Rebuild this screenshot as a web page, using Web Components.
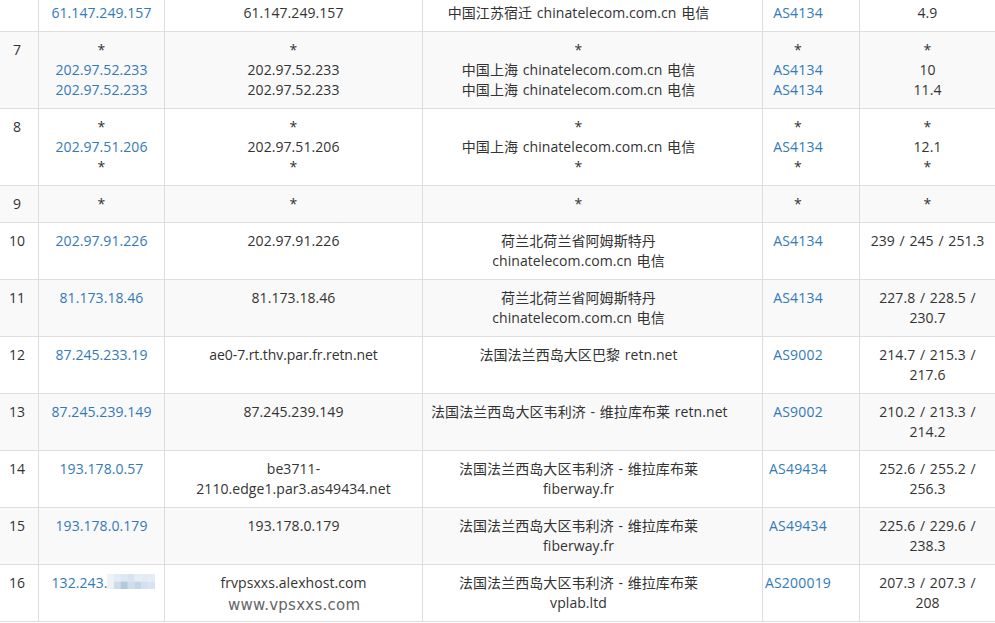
<!DOCTYPE html>
<html lang="zh"><head><meta charset="utf-8"><style>
html,body{margin:0;padding:0;background:#fff;overflow:hidden;height:623px}
body{font:14px/20px "Open Sans","Noto Sans CJK SC",sans-serif;color:#333;letter-spacing:.07px;word-spacing:1px}
</style></head><body>
<trace-table>
<trace-hop hop="" ip="61.147.249.157" host="61.147.249.157" geo="中国江苏宿迁 chinatelecom.com.cn 电信" as="AS4134" rtt="4.9"></trace-hop>
<trace-hop hop="7" shade ip="*|202.97.52.233|202.97.52.233" host="*|202.97.52.233|202.97.52.233" geo="*|中国上海 chinatelecom.com.cn 电信|中国上海 chinatelecom.com.cn 电信" as="*|AS4134|AS4134" rtt="*|10|11.4"></trace-hop>
<trace-hop hop="8" ip="*|202.97.51.206|*" host="*|202.97.51.206|*" geo="*|中国上海 chinatelecom.com.cn 电信|*" as="*|AS4134|*" rtt="*|12.1|*"></trace-hop>
<trace-hop hop="9" shade ip="*" host="*" geo="*" as="*" rtt="*"></trace-hop>
<trace-hop hop="10" ip="202.97.91.226" host="202.97.91.226" geo="荷兰北荷兰省阿姆斯特丹|chinatelecom.com.cn 电信" as="AS4134" rtt="239 / 245 / 251.3"></trace-hop>
<trace-hop hop="11" shade ip="81.173.18.46" host="81.173.18.46" geo="荷兰北荷兰省阿姆斯特丹|chinatelecom.com.cn 电信" as="AS4134" rtt="227.8 / 228.5 /|230.7"></trace-hop>
<trace-hop hop="12" tight ip="87.245.233.19" host="ae0-7.rt.thv.par.fr.retn.net" geo="法国法兰西岛大区巴黎 retn.net" as="AS9002" rtt="214.7 / 215.3 /|217.6"></trace-hop>
<trace-hop hop="13" shade ip="87.245.239.149" host="87.245.239.149" geo="法国法兰西岛大区韦利济 - 维拉库布莱 retn.net" as="AS9002" rtt="210.2 / 213.3 /|214.2"></trace-hop>
<trace-hop hop="14" ip="193.178.0.57" host="be3711-|2110.edge1.par3.as49434.net" geo="法国法兰西岛大区韦利济 - 维拉库布莱|fiberway.fr" as="AS49434" rtt="252.6 / 255.2 /|256.3"></trace-hop>
<trace-hop hop="15" shade ip="193.178.0.179" host="193.178.0.179" geo="法国法兰西岛大区韦利济 - 维拉库布莱|fiberway.fr" as="AS49434" rtt="225.6 / 229.6 /|238.3"></trace-hop>
<trace-hop hop="16" ip="132.243." blur host="frvpsxxs.alexhost.com" geo="法国法兰西岛大区韦利济 - 维拉库布莱|vplab.ltd" as="AS200019" rtt="207.3 / 207.3 /|208"></trace-hop>
<water-mark>www.vpsxxs.com</water-mark>
</trace-table>
<script>
class TraceTable extends HTMLElement{
  constructor(){super();this.attachShadow({mode:'open'}).innerHTML=`<style>
  :host{display:block;position:relative;margin-top:-5px;width:995px}
  </style><slot></slot>`;}
}
class TraceHop extends HTMLElement{
  connectedCallback(){
    const r=this.shadowRoot||this.attachShadow({mode:'open'});
    const lines=n=>(this.getAttribute(n)||'').split('|');
    const esc=s=>s.replace(/&/g,'&amp;').replace(/</g,'&lt;');
    const plain=n=>lines(n).map(l=>`<div>${esc(l)}</div>`).join('');
    const linked=n=>lines(n).map(l=>l==='*'?`<div>*</div>`:`<div><a>${esc(l)}</a></div>`).join('');
    const up=['#eef2f7','#e3ebf4','#dde7f2','#d8e3f0','#e6edf5','#e2eaf4','#e3ebf4'];
    const lo=['#eef2f7','#cddbea','#b3c8dd','#cfdcea','#c4d5e6','#d3e0ed','#d8e3ef'];
    const cells=up.map((c,i)=>`<rect x="${i*6.9}" y="0" width="7.1" height="7.6" fill="${c}"/><rect x="${i*6.9}" y="7.5" width="7.1" height="7.5" fill="${lo[i]}"/>`).join('');
    const mosaic=this.hasAttribute('blur')?`<svg class="mos" width="48" height="15" viewBox="0 0 48 15" aria-hidden="true">${cells}</svg>`:'';
    r.innerHTML=`<style>
    :host{display:grid;grid-template-columns:39px 126px 258px 340px 97px 135px;border-bottom:1px solid #ddd;background:${this.hasAttribute('shade')?'#f9f9f9':'#fff'}}
    .c{padding:8px 4px;text-align:center;border-right:1px solid #ddd;min-width:0;white-space:nowrap}
    .hop{padding-left:0;padding-right:4px}
    .geo{padding-left:8px;padding-right:36px}
    .as{padding-left:1px;padding-right:27px;letter-spacing:.2px}
    .rtt{border-right:0;padding-left:0;padding-right:0}
    .tight{letter-spacing:-.08px}
    a{color:#337ab7;text-decoration:none}
    .ipw{display:inline-flex;align-items:flex-start;margin-left:4px}
    .mos{display:block;margin-top:1px}
    </style>
    <div class="c hop">${esc(this.getAttribute('hop')||'')}</div>
    <div class="c">${this.hasAttribute('blur')?`<div class="ipw"><a>${esc(this.getAttribute('ip'))}</a>${mosaic}</div>`:linked('ip')}</div>
    <div class="c${this.hasAttribute('tight')?' tight':''}">${plain('host')}</div>
    <div class="c geo">${plain('geo')}</div>
    <div class="c as">${linked('as')}</div>
    <div class="c rtt">${plain('rtt')}</div>`;
  }
}
class WaterMark extends HTMLElement{
  constructor(){super();this.attachShadow({mode:'open'}).innerHTML=`<style>
  :host{position:absolute;left:228px;top:600px;font:15px/20px "DejaVu Sans",sans-serif;letter-spacing:.25px;word-spacing:0;color:#666;white-space:nowrap}
  </style><slot></slot>`;}
}
customElements.define('trace-table',TraceTable);
customElements.define('trace-hop',TraceHop);
customElements.define('water-mark',WaterMark);
</script>
</body></html>
